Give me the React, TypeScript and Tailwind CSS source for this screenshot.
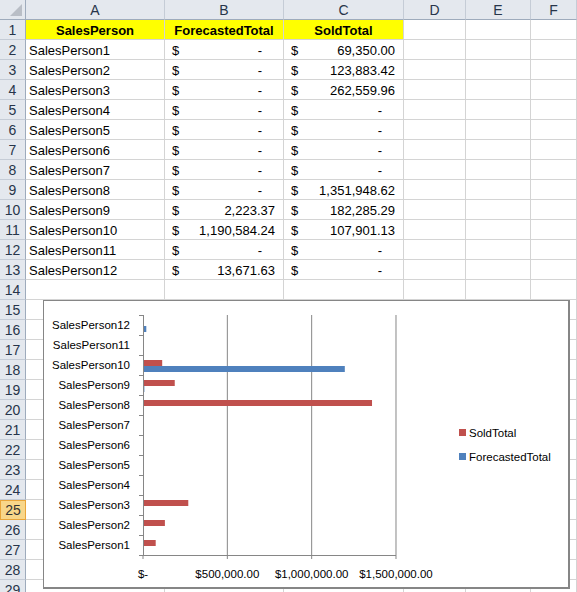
import React from 'react';

// sheet rows: [name, forecasted, sold]
const rows: [string, number, number][] = [
  ['SalesPerson1', 0, 69350.0],
  ['SalesPerson2', 0, 123883.42],
  ['SalesPerson3', 0, 262559.96],
  ['SalesPerson4', 0, 0],
  ['SalesPerson5', 0, 0],
  ['SalesPerson6', 0, 0],
  ['SalesPerson7', 0, 0],
  ['SalesPerson8', 0, 1351948.62],
  ['SalesPerson9', 2223.37, 182285.29],
  ['SalesPerson10', 1190584.24, 107901.13],
  ['SalesPerson11', 0, 0],
  ['SalesPerson12', 13671.63, 0],
];

const fmt = (n: number) =>
  n.toLocaleString('en-US', { minimumFractionDigits: 2, maximumFractionDigits: 2 });

const columns = ['A', 'B', 'C', 'D', 'E', 'F'];
const gridCols = 'grid-cols-[26px_139px_119px_120px_62px_65px_1fr]';

const RowHead = ({ n }: { n: number }) => (
  <div
    className={
      n === 25
        ? 'h-5 bg-[#f8d68a] border border-[#e9a53a] text-[#333] text-center text-[14px] leading-[19px]'
        : 'h-5 bg-[#e4e8ee] border-r border-b border-r-[#9eabbc] border-b-[#c5ccd6] text-[#27354a] text-center text-[14px] leading-[21px]'
    }
  >
    {n}
  </div>
);

const Cell = ({ children, className = '' }: { children?: React.ReactNode; className?: string }) => (
  <div className={`h-5 border-r border-b border-[#d4d4d4] leading-[21px] overflow-hidden whitespace-nowrap ${className}`}>
    {children}
  </div>
);

const Money = ({ v }: { v: number }) => (
  <div className="flex justify-between pl-[7px]">
    <span>$</span>
    {v === 0 ? <span className="pr-[21px]">-</span> : <span className="pr-[8px]">{fmt(v)}</span>}
  </div>
);

// chart geometry, relative to the chart box
const AX = 99;
const TOP = 14;
const BAND = 20;
const PX = 84.33 / 500000;

const Chart = () => {
  const cats = [...rows].reverse();
  return (
    <div className="absolute left-[43px] top-[300px] w-[527px] h-[289px] bg-white border border-[#868686] border-r-2 border-b-2">
      <svg width="524" height="286" className="block" style={{ fontFamily: '"Liberation Sans", Arial, sans-serif' }}>
        {[1, 2, 3].map((k) => (
          <line key={k} x1={AX + 84.33 * k} y1={TOP} x2={AX + 84.33 * k} y2={TOP + 240} stroke="#868686" />
        ))}
        {[0, 1, 2, 3].map((k) => (
          <line key={k} x1={AX + 84.33 * k} y1={TOP + 240} x2={AX + 84.33 * k} y2={TOP + 244} stroke="#868686" />
        ))}
        <line x1={AX + 0.5} y1={TOP} x2={AX + 0.5} y2={TOP + 240} stroke="#868686" />
        <line x1={AX} y1={TOP + 240.5} x2={AX + 253} y2={TOP + 240.5} stroke="#868686" />
        {Array.from({ length: 13 }).map((_, k) => (
          <line key={k} x1={AX - 4} y1={TOP + BAND * k + 0.5} x2={AX} y2={TOP + BAND * k + 0.5} stroke="#868686" />
        ))}
        {cats.map(([name, fc, sold], i) => {
          const y = TOP + BAND * i;
          return (
            <g key={name}>
              {sold > 0 && <rect x={AX + 1} y={y + 5} width={sold * PX} height={6} fill="#c0504d" />}
              {fc > 0 && <rect x={AX + 1} y={y + 11} width={fc * PX} height={6} fill="#4f81bd" />}
              <text x={86} y={y + 14} textAnchor="end" fontSize="11.5" fill="#000">
                {name}
              </text>
            </g>
          );
        })}
        {['$-', '$500,000.00', '$1,000,000.00', '$1,500,000.00'].map((t, k) => (
          <text key={t} x={AX + 84.33 * k} y={277} textAnchor="middle" fontSize="11.5" fill="#000">
            {t}
          </text>
        ))}
        <rect x={415} y={128} width={7} height={7} fill="#c0504d" />
        <text x={425} y={136} fontSize="11.5" fill="#000">SoldTotal</text>
        <rect x={415} y={152} width={7} height={7} fill="#4f81bd" />
        <text x={425} y={160} fontSize="11.5" fill="#000">ForecastedTotal</text>
      </svg>
    </div>
  );
};

export default function App() {
  return (
    <div
      className="relative w-[577px] h-[592px] overflow-hidden bg-white text-[13px] text-black"
      style={{ fontFamily: '"Liberation Sans", Arial, sans-serif' }}
    >
      <div className={`grid ${gridCols}`}>
        <div className="h-5 bg-[#e4e8ee] border-r border-b border-[#9eabbc] relative">
          <svg width="12" height="12" className="absolute right-[3px] bottom-[3px]">
            <polygon points="12,0 12,12 0,12" fill="#b9bec6" />
          </svg>
        </div>
        {columns.map((c) => (
          <div key={c} className="h-5 bg-[#e4e8ee] border-r border-b border-r-[#c5ccd6] border-b-[#9eabbc] text-center text-[14px] leading-5 text-[#27354a]">
            {c}
          </div>
        ))}

        <RowHead n={1} />
        <Cell className="bg-[#ffff00] font-bold text-center">SalesPerson</Cell>
        <Cell className="bg-[#ffff00] font-bold text-center">ForecastedTotal</Cell>
        <Cell className="bg-[#ffff00] font-bold text-center">SoldTotal</Cell>
        <Cell />
        <Cell />
        <Cell />

        {rows.map(([name, fc, sold], i) => (
          <React.Fragment key={name}>
            <RowHead n={i + 2} />
            <Cell className="pl-[3px]">{name}</Cell>
            <Cell><Money v={fc} /></Cell>
            <Cell><Money v={sold} /></Cell>
            <Cell />
            <Cell />
            <Cell />
          </React.Fragment>
        ))}

        {Array.from({ length: 16 }).map((_, i) => (
          <React.Fragment key={i}>
            <RowHead n={i + 14} />
            <Cell />
            <Cell />
            <Cell />
            <Cell />
            <Cell />
            <Cell />
          </React.Fragment>
        ))}
      </div>
      <Chart />
    </div>
  );
}
